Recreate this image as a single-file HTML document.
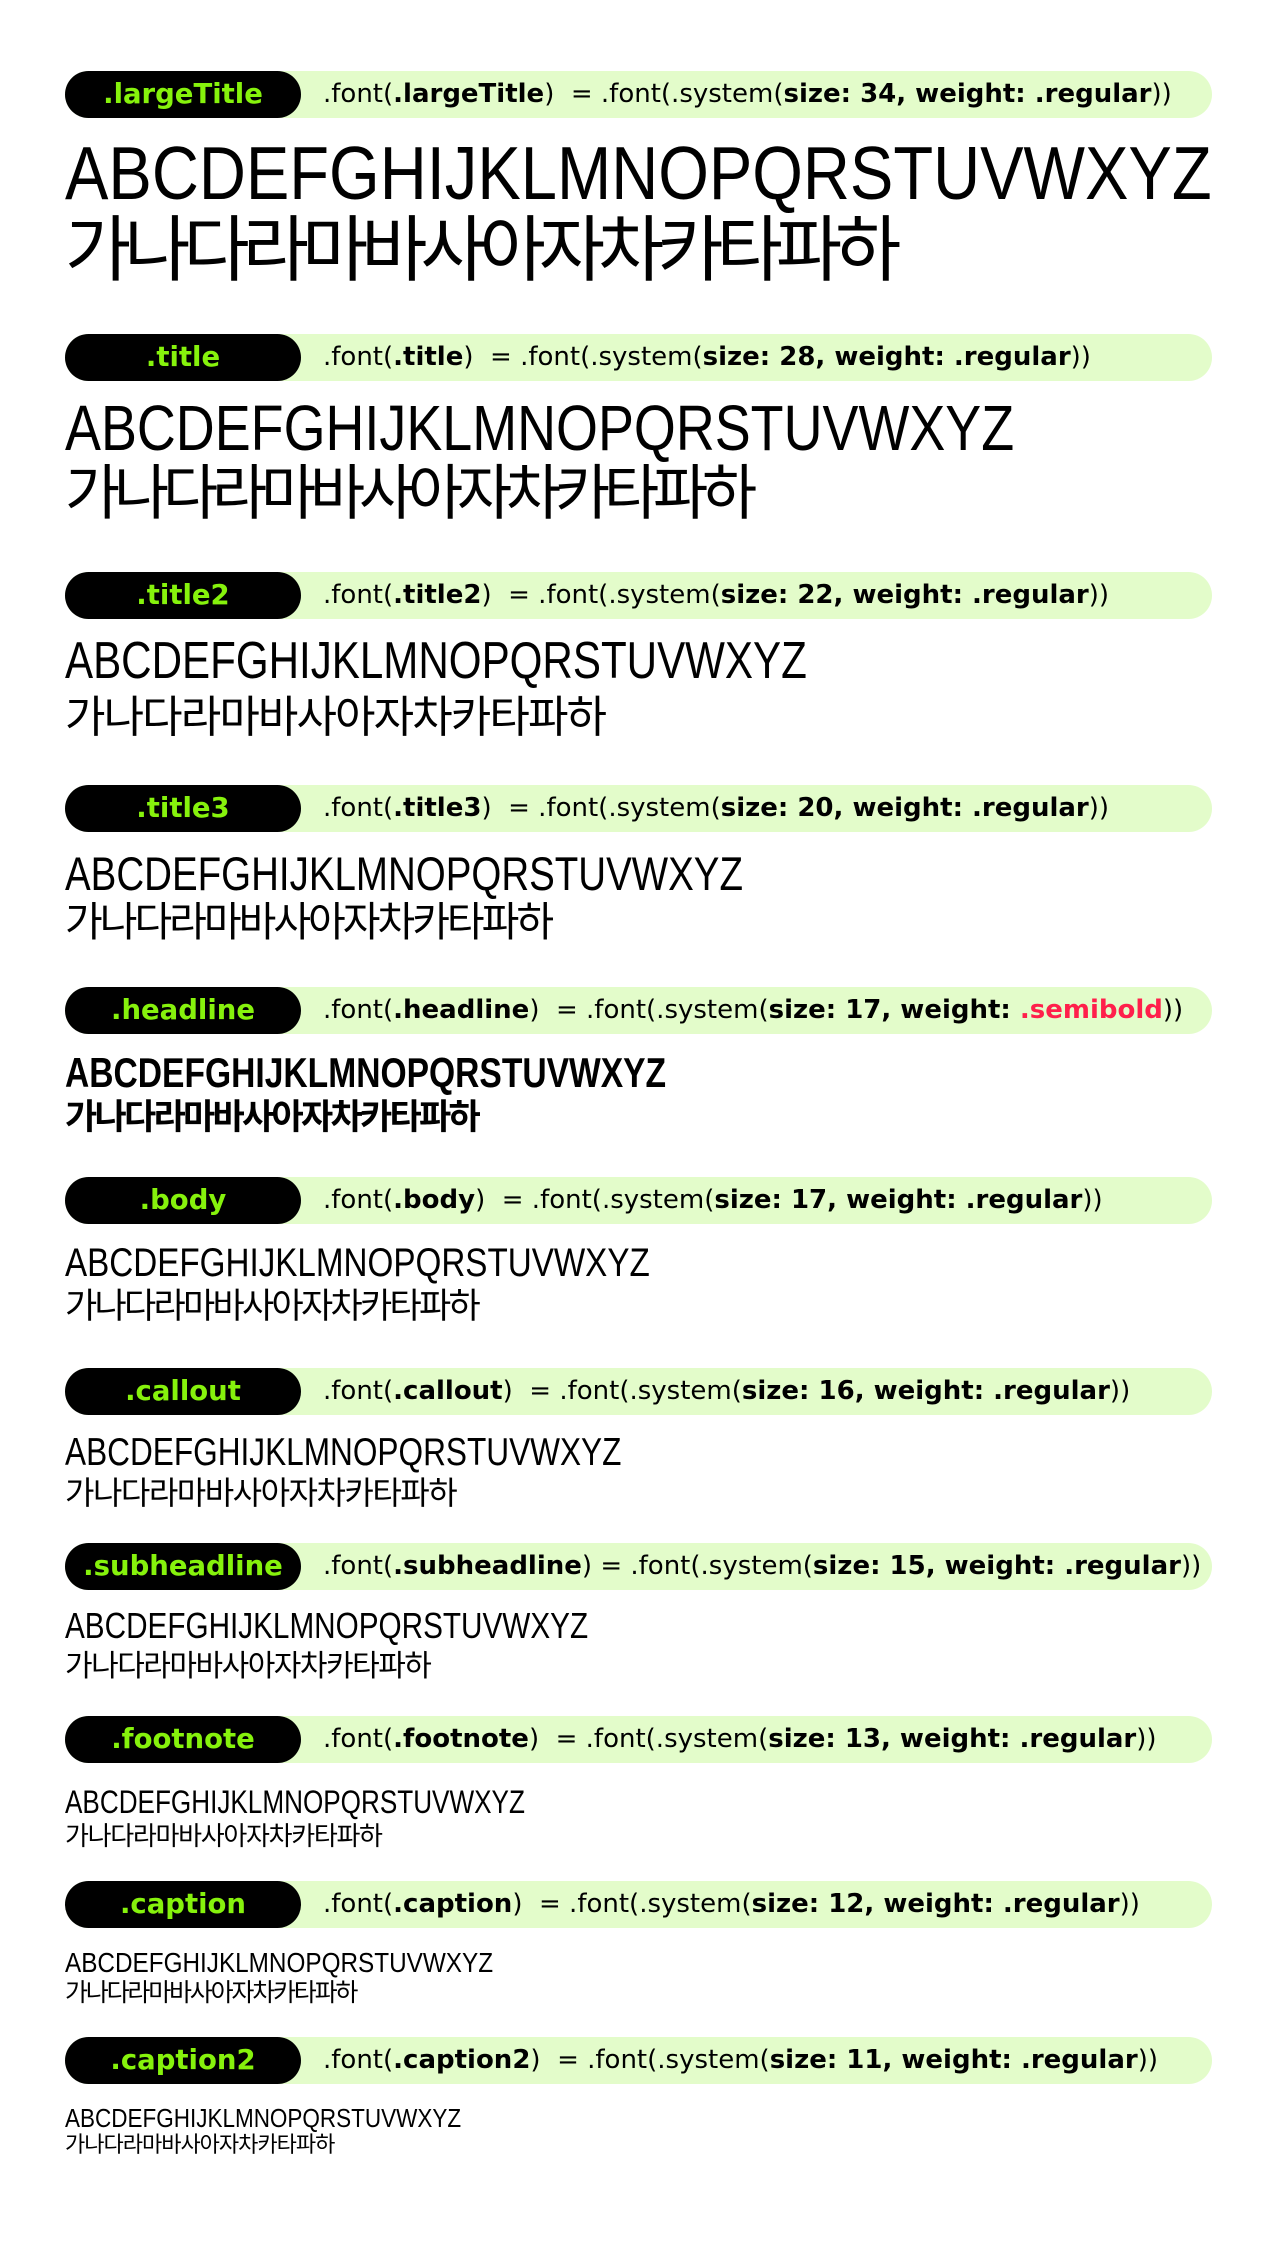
<!DOCTYPE html>
<html><head><meta charset="utf-8"><style>
body{margin:0;width:1280px;height:2257px;background:#fff;position:relative;overflow:hidden;font-family:"Liberation Sans","Noto Sans CJK KR",sans-serif;color:#000}
#w{position:absolute;left:0;top:0;width:1280px;height:2257px}
.bar{position:absolute;left:65px;width:1147px;height:47px;background:#e3fcca;border-radius:24px}
.pill{position:absolute;left:65px;width:236px;height:47px;background:#000;border-radius:24px;color:#86f20c;font-weight:bold;font-size:27.5px;line-height:47px;text-align:center;font-family:"DejaVu Sans",sans-serif}
.lab{position:absolute;left:323px;height:47px;line-height:47px;font-size:26px;white-space:nowrap;letter-spacing:0;font-family:"DejaVu Sans",sans-serif}
.lab b{font-weight:bold}
.t{position:absolute;left:65px;white-space:nowrap;line-height:1;transform-origin:0 0}
.k{position:absolute;left:65px;white-space:nowrap;line-height:1;font-family:"Noto Sans CJK KR",sans-serif}
.red{color:#ff1f4b}
</style></head><body><div id="w">

<div class="bar" style="top:71px"></div><div class="pill" style="top:71px">.largeTitle</div>
<div class="lab" style="top:71px">.font(<b>.largeTitle</b>)&nbsp; = .font(.system(<b>size: 34, weight: .regular</b>))</div>
<div class="t" style="top:136px;font-size:75px;transform:scaleX(0.868)">ABCDEFGHIJKLMNOPQRSTUVWXYZ</div>
<div class="k" style="top:208px;font-size:72px;letter-spacing:-7px">가나다라마바사아자차카타파하</div>

<div class="bar" style="top:334px"></div><div class="pill" style="top:334px">.title</div>
<div class="lab" style="top:334px">.font(<b>.title</b>)&nbsp; = .font(.system(<b>size: 28, weight: .regular</b>))</div>
<div class="t" style="top:396px;font-size:64px;transform:scaleX(0.842)">ABCDEFGHIJKLMNOPQRSTUVWXYZ</div>
<div class="k" style="top:459px;font-size:60px;letter-spacing:-6.2px">가나다라마바사아자차카타파하</div>

<div class="bar" style="top:572px"></div><div class="pill" style="top:572px">.title2</div>
<div class="lab" style="top:572px">.font(<b>.title2</b>)&nbsp; = .font(.system(<b>size: 22, weight: .regular</b>))</div>
<div class="t" style="top:635px;font-size:52px;transform:scaleX(0.81)">ABCDEFGHIJKLMNOPQRSTUVWXYZ</div>
<div class="k" style="top:691px;font-size:44px;letter-spacing:-1.9px">가나다라마바사아자차카타파하</div>

<div class="bar" style="top:785px"></div><div class="pill" style="top:785px">.title3</div>
<div class="lab" style="top:785px">.font(<b>.title3</b>)&nbsp; = .font(.system(<b>size: 20, weight: .regular</b>))</div>
<div class="t" style="top:850px;font-size:47px;transform:scaleX(0.819)">ABCDEFGHIJKLMNOPQRSTUVWXYZ</div>
<div class="k" style="top:898px;font-size:41px;letter-spacing:-3px">가나다라마바사아자차카타파하</div>

<div class="bar" style="top:987px"></div><div class="pill" style="top:987px">.headline</div>
<div class="lab" style="top:987px">.font(<b>.headline</b>)&nbsp; = .font(.system(<b>size: 17, weight: <span class="red">.semibold</span></b>))</div>
<div class="t" style="top:1052px;font-size:42px;font-weight:bold;transform:scaleX(0.80)">ABCDEFGHIJKLMNOPQRSTUVWXYZ</div>
<div class="k" style="top:1097px;font-size:35px;letter-spacing:-2.7px;font-weight:bold">가나다라마바사아자차카타파하</div>

<div class="bar" style="top:1177px"></div><div class="pill" style="top:1177px">.body</div>
<div class="lab" style="top:1177px">.font(<b>.body</b>)&nbsp; = .font(.system(<b>size: 17, weight: .regular</b>))</div>
<div class="t" style="top:1243px;font-size:40px;transform:scaleX(0.83)">ABCDEFGHIJKLMNOPQRSTUVWXYZ</div>
<div class="k" style="top:1286px;font-size:35px;letter-spacing:-2.7px">가나다라마바사아자차카타파하</div>

<div class="bar" style="top:1368px"></div><div class="pill" style="top:1368px">.callout</div>
<div class="lab" style="top:1368px">.font(<b>.callout</b>)&nbsp; = .font(.system(<b>size: 16, weight: .regular</b>))</div>
<div class="t" style="top:1433px;font-size:39px;transform:scaleX(0.81)">ABCDEFGHIJKLMNOPQRSTUVWXYZ</div>
<div class="k" style="top:1475px;font-size:32px;letter-spacing:-1.5px">가나다라마바사아자차카타파하</div>

<div class="bar" style="top:1543px"></div><div class="pill" style="top:1543px">.subheadline</div>
<div class="lab" style="top:1543px">.font(<b>.subheadline</b>) = .font(.system(<b>size: 15, weight: .regular</b>))</div>
<div class="t" style="top:1608px;font-size:36px;transform:scaleX(0.825)">ABCDEFGHIJKLMNOPQRSTUVWXYZ</div>
<div class="k" style="top:1648px;font-size:30px;letter-spacing:-1.5px">가나다라마바사아자차카타파하</div>

<div class="bar" style="top:1716px"></div><div class="pill" style="top:1716px">.footnote</div>
<div class="lab" style="top:1716px">.font(<b>.footnote</b>)&nbsp; = .font(.system(<b>size: 13, weight: .regular</b>))</div>
<div class="t" style="top:1786px;font-size:32px;transform:scaleX(0.816)">ABCDEFGHIJKLMNOPQRSTUVWXYZ</div>
<div class="k" style="top:1822px;font-size:26px;letter-spacing:-1.3px">가나다라마바사아자차카타파하</div>

<div class="bar" style="top:1881px"></div><div class="pill" style="top:1881px">.caption</div>
<div class="lab" style="top:1881px">.font(<b>.caption</b>)&nbsp; = .font(.system(<b>size: 12, weight: .regular</b>))</div>
<div class="t" style="top:1949px;font-size:28px;transform:scaleX(0.868)">ABCDEFGHIJKLMNOPQRSTUVWXYZ</div>
<div class="k" style="top:1979px;font-size:25px;letter-spacing:-2.2px">가나다라마바사아자차카타파하</div>

<div class="bar" style="top:2037px"></div><div class="pill" style="top:2037px">.caption2</div>
<div class="lab" style="top:2037px">.font(<b>.caption2</b>)&nbsp; = .font(.system(<b>size: 11, weight: .regular</b>))</div>
<div class="t" style="top:2105px;font-size:26px;transform:scaleX(0.865)">ABCDEFGHIJKLMNOPQRSTUVWXYZ</div>
<div class="k" style="top:2132px;font-size:22px;letter-spacing:-1px">가나다라마바사아자차카타파하</div>

</div></body></html>
